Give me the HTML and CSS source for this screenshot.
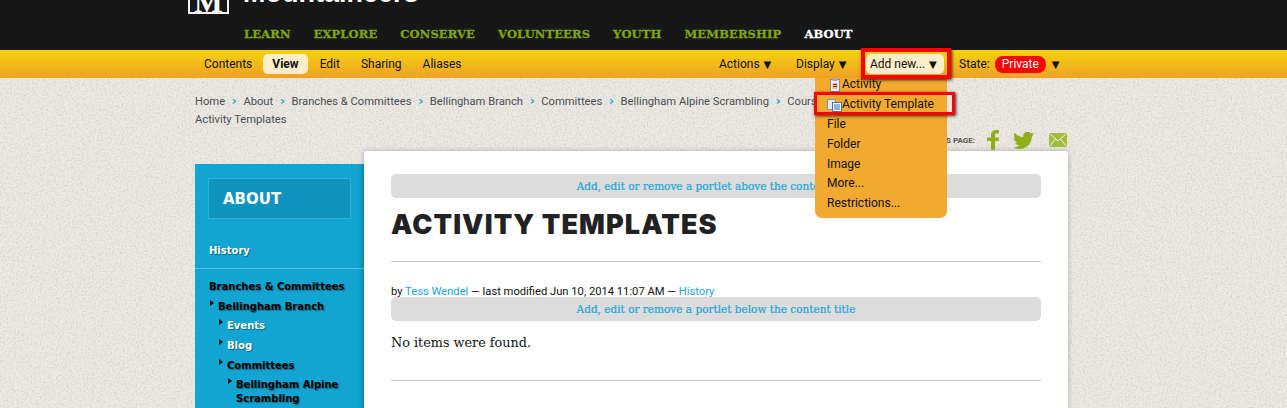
FILE: index.html
```html
<!DOCTYPE html>
<html lang="en">
<head>
    <meta charset="UTF-8">
    <title>Activity Templates</title>
    <link rel="stylesheet" href="styles.css">
</head>
<body>

<!-- Paper grain behind the page -->
<svg class="grain" width="1287" height="408">
    <filter id="paper">
        <feTurbulence type="fractalNoise" baseFrequency="0.55" numOctaves="3" seed="4"/>
        <feColorMatrix values="0 0 0 0 0.45  0 0 0 0 0.43  0 0 0 0 0.38  0.9 0 0 0 -0.38"/>
    </filter>
    <rect width="1287" height="408" filter="url(#paper)"/>
</svg>

<!-- Site header, cut off at the top of the window -->
<div class="header">
    <div class="logo-row">
        <div class="logo-box">M</div>
        <div class="logo-name">Mountaineers</div>
    </div>
    <div class="main-nav">
        <a href="#">LEARN</a>
        <a href="#">EXPLORE</a>
        <a href="#">CONSERVE</a>
        <a href="#">VOLUNTEERS</a>
        <a href="#">YOUTH</a>
        <a href="#">MEMBERSHIP</a>
        <a href="#" class="current">ABOUT</a>
    </div>
</div>

<!-- Edit bar -->
<div class="edit-bar">
    <div class="edit-left">
        <a href="#">Contents</a>
        <a href="#" class="selected">View</a>
        <a href="#">Edit</a>
        <a href="#">Sharing</a>
        <a href="#">Aliases</a>
    </div>
    <div class="edit-right">
        <a href="#" class="act-actions">Actions <span class="arrow">▼</span></a>
        <a href="#" class="act-display">Display <span class="arrow">▼</span></a>
        <a href="#" class="act-add">Add new... <span class="arrow">▼</span></a>
        <span class="act-state">State: <span class="private">Private</span> <span class="arrow">▼</span></span>

        <div class="add-menu">
            <div class="add-item with-icon first">
                <svg class="icon-activity" width="10" height="14" viewBox="0 0 10 14"><rect x="0.500" y="1.500" width="9" height="12" fill="#f4eee6" stroke="#8a8a8a"/><rect x="2.500" y="0" width="5" height="3" fill="#a8a8a8"/><rect x="2.500" y="5" width="5" height="6" fill="#e3b4b0"/><path d="M3 6.500h4M3 8.500h4" stroke="#b02020"/></svg>
                Activity
            </div>
            <div class="add-item with-icon">
                <svg width="15" height="13" viewBox="0 0 15 13"><rect x="0.500" y="0.500" width="8" height="10" fill="#dfe8f5" stroke="#7f94b8"/><rect x="5.500" y="3.500" width="9" height="9" fill="#f6f8fc" stroke="#4a70b0"/><path d="M7 6h6M7 8h6M7 10h6" stroke="#3a66c0"/></svg>
                Activity Template
            </div>
            <div class="add-item">File</div>
            <div class="add-item">Folder</div>
            <div class="add-item">Image</div>
            <div class="add-item">More...</div>
            <div class="add-item">Restrictions...</div>
        </div>
        <div class="mark mark-add"></div>
        <div class="mark mark-template"></div>
    </div>
</div>

<div class="page">
    <div class="crumbs">
        <span>Home</span><i>›</i><span>About</span><i>›</i><span>Branches &amp; Committees</span><i>›</i><span>Bellingham Branch</span><i>›</i><span>Committees</span><i>›</i><span>Bellingham Alpine Scrambling</span><i>›</i><span>Courses</span><i>›</i><span>Bellingham</span><i>›</i><br>
        <span>Activity Templates</span>
    </div>

    <div class="share">
        <span class="share-label">SHARE THIS PAGE:</span>
        <svg class="fb" width="14" height="20" viewBox="0 0 14 20"><path d="M5 20V11H1V7.500h4V5c0-3 2-5 5-5h3v3.500h-2.500C9.500 3.500 9 4 9 5v2.500h4L12.500 11H9v9z" fill="#8fae1b"/></svg>
        <svg class="tw" width="21" height="17" viewBox="0 0 21 17"><path d="M21 2c-.8.400-1.600.600-2.500.700.900-.500 1.600-1.400 1.900-2.400-.800.500-1.800.900-2.700 1A4.300 4.300 0 0 0 10.300 5.200C6.800 5 3.600 3.300 1.500.800c-1.100 2-.500 4.400 1.300 5.700-.700 0-1.300-.200-1.900-.500 0 2.100 1.500 3.900 3.400 4.300-.600.200-1.300.200-1.900.100.500 1.700 2.100 2.900 4 3A8.600 8.600 0 0 1 0 15.200C2 16.400 4.200 17 6.600 17c8 0 12.500-6.800 12.300-12.800.800-.600 1.500-1.300 2.100-2.200z" fill="#8fae1b"/></svg>
        <svg class="mail" width="18" height="14" viewBox="0 0 18 14"><rect width="18" height="14" fill="#a3bc3c"/><path d="M0.500 0.500L9 8l8.500-7.500M0.500 13.500L6.500 6M17.500 13.500L11.500 6" fill="none" stroke="#eef0e0"/></svg>
    </div>

    <div class="columns">
        <div class="side">
            <div class="side-title">ABOUT</div>
            <div class="side-top"><a href="#">History</a></div>
            <div class="side-tree">
                <div class="lv0 dark">Branches &amp; Committees</div>
                <div class="lv1 dark tri">Bellingham Branch</div>
                <div class="lv2 tri">Events</div>
                <div class="lv2 tri">Blog</div>
                <div class="lv2 dark tri">Committees</div>
                <div class="lv3 dark tri">Bellingham Alpine Scrambling</div>
            </div>
        </div>

        <div class="content">
            <div class="portlet-link">Add, edit or remove a portlet above the content title</div>
            <h1>ACTIVITY TEMPLATES</h1>
            <div class="byline">by <a href="#">Tess Wendel</a> — last modified Jun 10, 2014 11:07 AM — <a href="#">History</a></div>
            <div class="portlet-link">Add, edit or remove a portlet below the content title</div>
            <p class="empty">No items were found.</p>
            <div class="end-rule"></div>
        </div>
    </div>
</div>

</body>
</html>
```

FILE: styles.css
```css
html, body {
    height: 408px;
    overflow: hidden;
}
body {
    margin: 0;
    padding: 0;
    font-family: Roboto, sans-serif;
    font-size: 12px;
    color: #111;
    background-color: #ece9e3;
}
a {
    color: inherit;
    text-decoration: none;
}
.grain {
    position: absolute;
    top: 0;
    left: 0;
    z-index: -1;
}

/* header */
.header {
    height: 50px;
    background-color: #171717;
    padding-left: 188px;
    overflow: hidden;
}
.logo-row {
    display: flex;
    height: 14px;
    margin-top: -14px;
}
.logo-box {
    box-sizing: border-box;
    flex-shrink: 0;
    width: 41px;
    height: 28px;
    border: 2px solid #f4f4f4;
    color: #fff;
    font-family: "Liberation Serif", serif;
    font-weight: bold;
    font-size: 30px;
    line-height: 28px;
    text-align: center;
}
.logo-name {
    margin-left: 14px;
    color: #fff;
    font-family: "Liberation Sans", sans-serif;
    font-weight: bold;
    font-size: 27px;
    line-height: 14px;
}
.main-nav {
    display: flex;
    gap: 23px;
    padding: 27px 0 0 56px;
    font-family: "DejaVu Serif", serif;
    font-weight: bold;
    font-size: 11.500px;
    letter-spacing: 0.140px;
    -webkit-text-stroke: 0.3px;
    line-height: 14px;
    color: #7fa50f;
}
.main-nav .current {
    color: #fff;
}

/* edit bar */
.edit-bar {
    position: relative;
    height: 28px;
    display: flex;
    justify-content: space-between;
    background: linear-gradient(#f4d30f, #efa025);
    font-size: 12px;
    line-height: 28px;
}
.edit-left {
    display: flex;
    padding-left: 204px;
}
.edit-left a {
    margin-right: 21px;
}
.edit-left .selected {
    height: 20px;
    margin: 4px 12px 0 -10px;
    padding: 0 9px;
    line-height: 20px;
    background-color: #fdedc8;
    border-radius: 5px;
    font-weight: bold;
}
.edit-right {
    position: relative;
    width: 568px;
    height: 28px;
}
.arrow {
    margin-left: 1px;
    font-family: "DejaVu Sans", sans-serif;
    font-size: 10px;
}

/* these four sit at their own spots along the bar */
.edit-right > a, .act-state {
    position: absolute;
    top: 0;
    white-space: nowrap;
}
.act-actions { left: 0; }
.act-display { left: 77px; }
.edit-right > .act-add {
    left: 147px;
    top: 4px;
    height: 20px;
    width: 68px;
    padding: 0 6px 0 4px;
    line-height: 20px;
    background-color: #fdedc8;
    border-radius: 5px;
}
.act-state { left: 240px; }
.private {
    display: inline-block;
    height: 17px;
    margin: 0 2px;
    padding: 0 7px;
    line-height: 17px;
    color: #fff;
    background-color: #f00;
    border-radius: 8px;
}
.add-menu {
    position: absolute;
    top: 28px;
    left: 96px;
    box-sizing: border-box;
    width: 132px;
    height: 140px;
    padding: 0 12px;
    background-color: #f1a92f;
    border-radius: 0 0 7px 7px;
    z-index: 5;
}
.add-item {
    height: 19.800px;
    line-height: 19.800px;
    white-space: nowrap;
}
.add-item.first {
    margin-top: -2.600px;
}
.with-icon {
    display: flex;
    align-items: center;
}
.with-icon svg {
    flex-shrink: 0;
}
.icon-activity {
    margin: 0 2px 0 3px;
}
.mark {
    position: absolute;
    box-sizing: border-box;
    border: 3px solid #f00;
    box-shadow: 1px 1px 3px rgba(0, 0, 0, 0.8);
    z-index: 6;
}
.mark-add {
    left: 142px;
    top: -2px;
    width: 90px;
    height: 31px;
    border-width: 4px;
}
.mark-template {
    left: 95px;
    top: 42px;
    width: 141px;
    height: 23px;
}

/* page */
.page {
    position: relative;
    padding-left: 195px;
}
.crumbs {
    height: 58px;
    padding-top: 14px;
    box-sizing: border-box;
    width: 860px;
    font-size: 11.200px;
    line-height: 18px;
    color: #4a4f57;
}
.crumbs i {
    display: inline-block;
    width: 18.300px;
    text-align: center;
    font-family: "DejaVu Sans", sans-serif;
    font-size: 13px;
    color: #29a9d8;
    font-style: normal;
    font-weight: bold;
}
.share {
    position: absolute;
    top: 52px;
    left: 986px;
    display: flex;
    align-items: center;
}
.fb { margin-right: 13px; }
.tw { margin-right: 15px; }
.share-label {
    position: absolute;
    right: 92px;
    font-size: 8px;
    font-weight: bold;
    color: #555;
    white-space: nowrap;
}
.columns {
    display: flex;
    margin-top: 15px;
}
.side {
    box-sizing: border-box;
    width: 169px;
    height: 300px;
    margin-top: 13px;
    padding-top: 14px;
    background-color: #12a5d3;
    box-shadow: inset -4px 0 4px -2px rgba(0, 0, 0, 0.15);
}
.side-title {
    box-sizing: border-box;
    width: 143px;
    height: 41px;
    margin-left: 13px;
    padding-left: 14px;
    font-family: "DejaVu Sans", sans-serif;
    line-height: 40px;
    font-size: 15px;
    font-weight: bold;
    color: #fff;
    background-color: #0f94bf;
    border: 1px solid #2fb0d6;
}
.side-top {
    height: 45px;
    padding: 21px 0 0 14px;
    box-sizing: border-box;
    border-bottom: 1px solid #5cc0de;
    margin-top: 5px;
    font-family: "DejaVu Sans", sans-serif;
    font-size: 10px;
    font-weight: bold;
    color: #fff;
    text-shadow: 1px 1px 1px rgba(0, 0, 0, 0.4);
}
.side-tree {
    padding: 11px 4px 0 14px;
    font-family: "DejaVu Sans", sans-serif;
    font-size: 10px;
    font-weight: bold;
    line-height: 13.500px;
    color: #fff;
    text-shadow: 1px 1px 1px rgba(0, 0, 0, 0.4);
}
.side-tree > div {
    position: relative;
    margin-bottom: 6.200px;
}
.side-tree .dark {
    color: #050505;
}
.lv1 { margin-left: 9px; }
.lv2 { margin-left: 18px; }
.lv3 { margin-left: 27px; }
.tri::before {
    content: "";
    position: absolute;
    left: -8px;
    top: 0;
    border-left: 4px solid #111;
    border-top: 3.500px solid transparent;
    border-bottom: 3.500px solid transparent;
}
.content {
    box-sizing: border-box;
    width: 704px;
    height: 300px;
    padding: 23px 27px 0;
    background-color: #fff;
    border-radius: 3px 3px 0 0;
    box-shadow: 0 0 5px rgba(0, 0, 0, 0.25);
}
.portlet-link {
    height: 24px;
    line-height: 24px;
    text-align: center;
    font-family: "DejaVu Serif", serif;
    font-size: 10.500px;
    -webkit-text-stroke: 0.2px;
    color: #21a6d6;
    background-color: #dcdcdc;
    border-radius: 5px;
}
h1 {
    height: 64px;
    margin: 0 0 23px;
    padding-top: 11px;
    box-sizing: border-box;
    border-bottom: 1px solid #c9c7c0;
    font-family: "Inter", sans-serif;
    font-size: 27px;
    font-weight: 900;
    line-height: 32px;
    letter-spacing: 1.100px;
    color: #222;
}
.byline {
    height: 12px;
    font-size: 11.200px;
    line-height: 14px;
}
.byline a {
    color: #21a6d6;
}
.empty {
    height: 59px;
    margin: 0;
    padding-top: 13px;
    box-sizing: border-box;
    font-family: "DejaVu Serif", serif;
    font-size: 12.800px;
    line-height: 18px;
}
.end-rule {
    border-top: 1px solid #c9c7c0;
}
```
